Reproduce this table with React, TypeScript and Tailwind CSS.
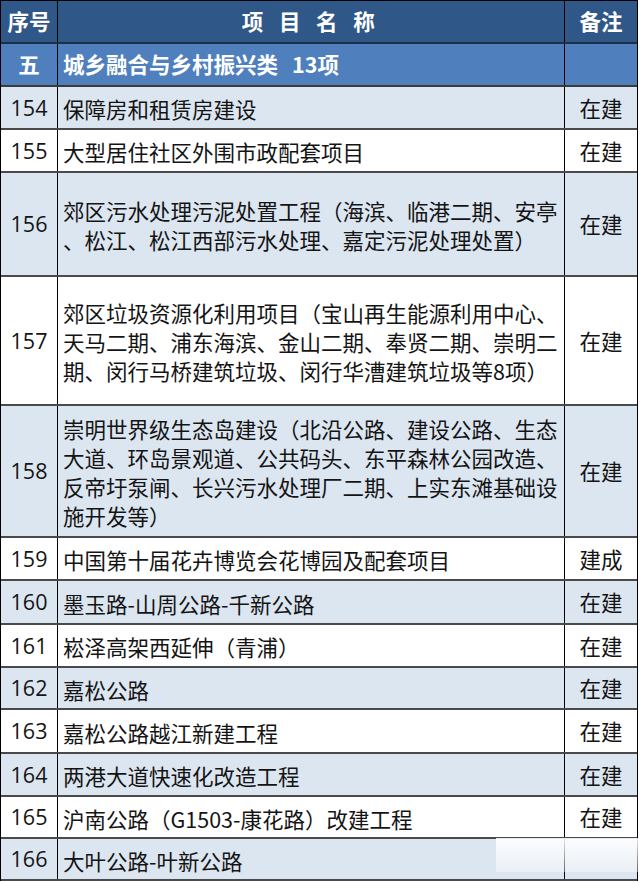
import React from 'react'

const FONT = '"Noto Sans CJK SC", "Noto Sans", sans-serif'
const NUM_FONT = '"Open Sans", "Noto Sans CJK SC", sans-serif'

interface Row {
  no: string
  lines: string[]
  note: string
  h: string
}

const ROWS: Row[] = [
  { no: '154', lines: ['保障房和租赁房建设'], note: '在建', h: 'h-[43px]' },
  { no: '155', lines: ['大型居住社区外围市政配套项目'], note: '在建', h: 'h-[43px]' },
  {
    no: '156',
    lines: ['郊区污水处理污泥处置工程（海滨、临港二期、安亭', '、松江、松江西部污水处理、嘉定污泥处理处置）'],
    note: '在建',
    h: 'h-[104px]',
  },
  {
    no: '157',
    lines: [
      '郊区垃圾资源化利用项目（宝山再生能源利用中心、',
      '天马二期、浦东海滨、金山二期、奉贤二期、崇明二',
      '期、闵行马桥建筑垃圾、闵行华漕建筑垃圾等8项）',
    ],
    note: '在建',
    h: 'h-[129px]',
  },
  {
    no: '158',
    lines: [
      '崇明世界级生态岛建设（北沿公路、建设公路、生态',
      '大道、环岛景观道、公共码头、东平森林公园改造、',
      '反帝圩泵闸、长兴污水处理厂二期、上实东滩基础设',
      '施开发等）',
    ],
    note: '在建',
    h: 'h-[132px]',
  },
  { no: '159', lines: ['中国第十届花卉博览会花博园及配套项目'], note: '建成', h: 'h-[43px]' },
  { no: '160', lines: ['墨玉路-山周公路-千新公路'], note: '在建', h: 'h-[44px]' },
  { no: '161', lines: ['崧泽高架西延伸（青浦）'], note: '在建', h: 'h-[43px]' },
  { no: '162', lines: ['嘉松公路'], note: '在建', h: 'h-[42px]' },
  { no: '163', lines: ['嘉松公路越江新建工程'], note: '在建', h: 'h-[44px]' },
  { no: '164', lines: ['两港大道快速化改造工程'], note: '在建', h: 'h-[43px]' },
  { no: '165', lines: ['沪南公路（G1503-康花路）改建工程'], note: '在建', h: 'h-[42px]' },
  { no: '166', lines: ['大叶公路-叶新公路'], note: '', h: 'h-[42px]' },
]

export default function App() {
  return (
    <div className="relative h-[882px] w-[640px] bg-white" style={{ fontFamily: FONT }}>
      <div className="w-[638px] border-l border-t border-r border-black">
        {/* header */}
        <div className="flex h-[43px] border-b-2 border-[#1c2f48] bg-[#2f5889] text-[21.5px] font-bold text-white">
          <div className="flex w-[57px] items-center justify-center border-r border-black">序号</div>
          <div className="flex flex-1 items-center justify-center border-r border-black tracking-[0.25em]">
            项 目 名 称
          </div>
          <div className="flex w-[72px] items-center justify-center">备注</div>
        </div>
        {/* section */}
        <div className="flex h-[43px] border-b-2 border-[#3a3a3a] bg-[#4f80bd] text-[21.5px] font-bold text-white">
          <div className="flex w-[57px] items-center justify-center border-r border-black">五</div>
          <div className="flex flex-1 items-center border-r border-black pl-[5px]">
            城乡融合与乡村振兴类<span className="ml-[14px]">13项</span>
          </div>
          <div className="w-[72px]" />
        </div>
        {ROWS.map((r, i) => (
          <div
            key={r.no}
            className={`flex ${r.h} border-b-2 border-[#4a4a4a] text-[21.5px] text-[#141414] ${
              i % 2 === 0 ? 'bg-[#dce6f1]' : 'bg-white'
            }`}
          >
            <div
              className="flex w-[57px] items-center justify-center border-r border-black pt-[1px] text-[21.5px]"
              style={{ fontFamily: NUM_FONT }}
            >
              {r.no}
            </div>
            <div className="flex flex-1 flex-col justify-center border-r border-black pl-[5px] pt-[2px] leading-[29px]">
              {r.lines.map((l) => (
                <div key={l} className="whitespace-nowrap">
                  {l}
                </div>
              ))}
            </div>
            <div className="flex w-[72px] items-center justify-center pt-[1px]">{r.note}</div>
          </div>
        ))}
      </div>
      {/* watermark fade */}
      <div className="absolute left-[496px] top-[838px] h-[34px] w-[142px] bg-gradient-to-b from-white/90 to-white/40" />
    </div>
  )
}
